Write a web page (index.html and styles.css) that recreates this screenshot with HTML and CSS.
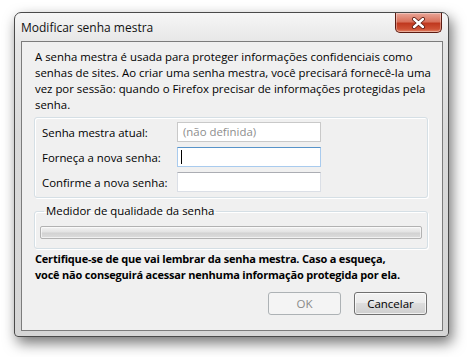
FILE: index.html
```html
<!DOCTYPE html>
<html lang="pt-BR">
<head>
  <meta charset="UTF-8" />
  <title>Modificar senha mestra</title>
  <link rel="stylesheet" href="styles.css">
</head>
<body>

  <div class="window">
    <div class="titlebar">
      <span class="title">Modificar senha mestra</span>
      <div class="close">
        <svg width="15" height="12" viewBox="0 0 15 12">
          <path d="M3 2 L12 10 M12 2 L3 10" stroke="#5a1a10" stroke-width="4" stroke-linecap="round"/>
          <path d="M3 2 L12 10 M12 2 L3 10" stroke="#fff" stroke-width="2.4" stroke-linecap="round"/>
        </svg>
      </div>
    </div>

    <div class="client">
      <p class="intro">A senha mestra é usada para proteger informações confidenciais como<br>senhas de sites. Ao criar uma senha mestra, você precisará fornecê-la uma<br>vez por sessão: quando o Firefox precisar de informações protegidas pela<br>senha.</p>

      <div class="group fields">
        <div class="row">
          <span class="label">Senha mestra atual:</span>
          <div class="field disabled">(não definida)</div>
        </div>
        <div class="row">
          <span class="label">Forneça a nova senha:</span>
          <div class="field focused"><span class="caret"></span></div>
        </div>
        <div class="row">
          <span class="label">Confirme a nova senha:</span>
          <div class="field"></div>
        </div>
      </div>

      <fieldset class="group meter">
        <legend>Medidor de qualidade da senha</legend>
        <div class="bar"></div>
      </fieldset>

      <p class="warning">Certifique-se de que vai lembrar da senha mestra. Caso a esqueça,<br>você não conseguirá acessar nenhuma informação protegida por ela.</p>

      <div class="actions">
        <button class="btn" disabled>OK</button>
        <button class="btn">Cancelar</button>
      </div>
    </div>
  </div>

</body>
</html>
```

FILE: styles.css
```css
*, *::before, *::after {
  box-sizing: border-box;
}

html, body {
  margin: 0;
  padding: 0;
  background: #ffffff;
  font-family: 'Open Sans', 'Noto Sans', sans-serif;
  font-size: 11.4px;
  color: #000;
}

body {
  width: 467px;
  height: 357px;
  overflow: hidden;
  padding: 12px 0 0 14px;
}

.window {
  width: 435px;
  height: 325px;
  border: 1px solid #4a4a4a;
  border-radius: 7px 7px 4px 4px;
  background: linear-gradient(to bottom, #f6f6f6 0, #e6e6e6 30px, #dadada 120px, #d6d6d6 100%);
  box-shadow: 3px 6px 14px rgba(0, 0, 0, 0.55);
  display: flex;
  flex-direction: column;
  padding: 0 5px 5px 6px;
}

.titlebar {
  height: 28px;
  display: flex;
  justify-content: space-between;
  align-items: flex-start;
}

.title {
  font-size: 12px;
  margin-top: 6px;
  color: #111;
}

.close {
  width: 47px;
  height: 20px;
  margin-right: 1px;
  border: 1px solid #5c1b12;
  border-top: none;
  border-radius: 0 0 5px 5px;
  background: linear-gradient(to bottom, #e9a698 0, #d9725c 45%, #c0391f 55%, #cf5235 85%, #e58a6c 100%);
  box-shadow: inset 0 0 0 1px rgba(255, 255, 255, 0.35);
  display: flex;
  align-items: center;
  justify-content: center;
}

.client {
  flex: 1;
  border: 1px solid #7c7c7c;
  background: #f0f0f0;
  padding: 7px 13px 0 13px;
  display: flex;
  flex-direction: column;
}

.intro {
  margin: 0;
  line-height: 16px;
  white-space: nowrap;
}

.group {
  border: 1px solid #d5dfe5;
  border-radius: 3px;
  box-shadow: inset 1px 1px 0 #fff, 1px 1px 0 #fff;
  margin: 4px 1px 0 -1px;
}

.fields {
  padding: 4px 7px 5px 7px;
  display: flex;
  flex-direction: column;
  gap: 5px;
}

.row {
  display: flex;
  align-items: center;
}

.label {
  width: 135px;
}

.field {
  width: 144px;
  height: 20px;
  border: 1px solid #dbdfe6;
  border-top-color: #abadb3;
  background: #fff;
  padding: 1px 5px;
  line-height: 16px;
}

.field.disabled {
  border-color: #c9c9c9;
  color: #8d8d8d;
}

.field.focused {
  border-color: #a9cbee;
  border-top-color: #5793c9;
}

.caret {
  display: inline-block;
  width: 1px;
  height: 14px;
  margin: 1px 0 0 -2px;
  background: #000;
  vertical-align: top;
}

.meter {
  margin-top: 6px;
  padding: 8px 5px 9px 5px;
}

.meter legend {
  padding: 0 2px;
  margin-left: 4px;
  line-height: 14px;
}

.bar {
  height: 13px;
  border: 1px solid #b2b2b2;
  border-radius: 2px;
  background: linear-gradient(to bottom, #f3f3f3 0, #e3e3e3 45%, #d2d2d2 55%, #dddddd 100%);
  box-shadow: inset 0 0 0 1px rgba(255, 255, 255, 0.6);
}

.warning {
  margin: 2px 0 0 0;
  font-weight: 700;
  line-height: 16px;
  font-size: 11px;
  letter-spacing: -0.2px;
  white-space: nowrap;
}

.actions {
  display: flex;
  justify-content: flex-end;
  gap: 13px;
  margin-top: 9px;
  margin-right: 2px;
}

.btn {
  width: 73px;
  height: 23px;
  font-family: inherit;
  font-size: 11.5px;
  color: #000;
  border: 1px solid #707070;
  border-radius: 3px;
  background: linear-gradient(to bottom, #f2f2f2 0, #ebebeb 50%, #dddddd 50%, #cfcfcf 100%);
  box-shadow: inset 0 0 0 1px rgba(255, 255, 255, 0.7);
  padding: 0;
}

.btn:disabled {
  border-color: #adb2b5;
  background: #f4f4f4;
  color: #8a8a8a;
  box-shadow: none;
}
```
